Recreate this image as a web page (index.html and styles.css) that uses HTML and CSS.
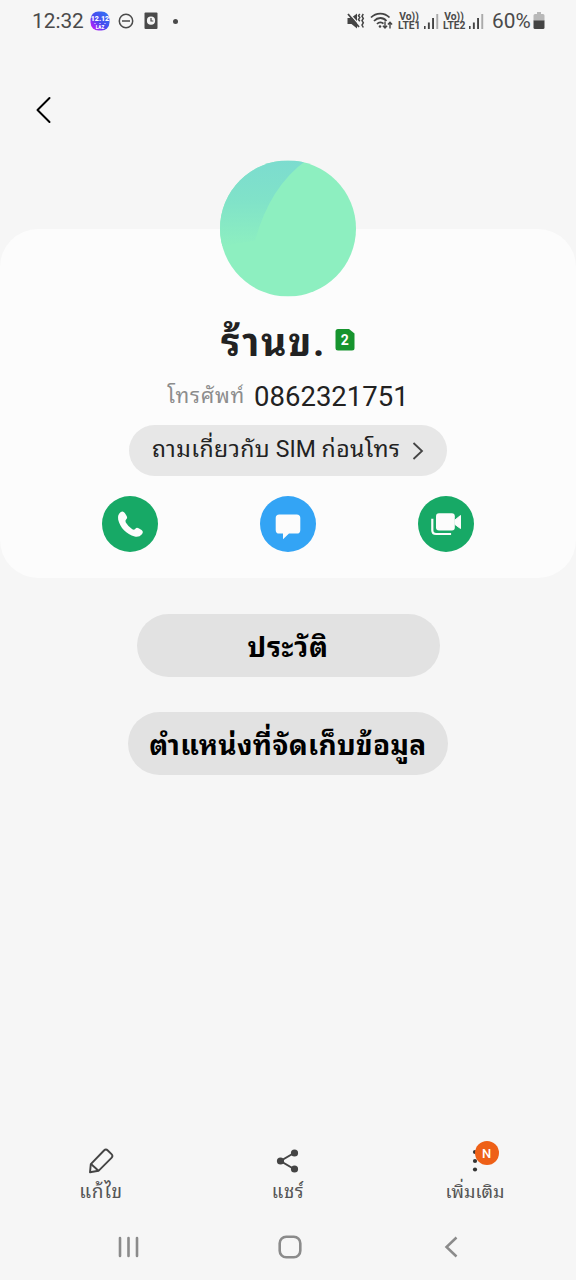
FILE: index.html
```html
<!DOCTYPE html>
<html lang="th">
<head>
<meta charset="utf-8">
<title>ร้านข.</title>
<link rel="stylesheet" href="styles.css">
</head>
<body>
<div class="screen">
  <header class="status">
    <div class="status-left">
      <span class="clock">12:32</span>
      <svg class="app-badge" width="20" height="20" viewBox="0 0 20 20">
        <defs><linearGradient id="promo" x1="0" y1="1" x2="1" y2="0"><stop offset="0" stop-color="#e010ff"/><stop offset=".45" stop-color="#4a48ee"/><stop offset="1" stop-color="#2c7cf6"/></linearGradient></defs>
        <rect x=".5" y=".5" width="19" height="19" rx="8" fill="url(#promo)"/>
        <text x="10" y="10" class="promo-big">12.12</text>
        <path d="M4 12.500h2M9 12.500h2M14 12.500h2" stroke="#c9c4ff" stroke-width=".7"/>
        <text x="10" y="18" class="promo-small">LAZ</text>
      </svg>
      <svg class="dnd" width="16" height="16" viewBox="0 0 16 16" fill="none" stroke="#4a4a4a" stroke-width="1.5"><circle cx="8" cy="8" r="6.7"/><path d="M4 8h8"/></svg>
      <svg class="alarm" width="14" height="18" viewBox="0 0 14 18"><rect x=".5" y=".5" width="13" height="16.5" rx="1" fill="#4a4a4a"/><circle cx="7" cy="8.7" r="4.1" fill="#f5f5f5"/><path d="M7 6v3h2.3" stroke="#4a4a4a" stroke-width="1.2" fill="none"/></svg>
      <span class="dot"></span>
    </div>
    <div class="status-right">
      <svg class="mute" width="18" height="18" viewBox="0 0 18 18"><path d="M.5 6H4l6-4.500v15L4.500 12h-4z" fill="#444"/><path d="M1.800 1L13 13.500" stroke="#f5f5f5" stroke-width="1.300"/><path d="M1 2l11 13" stroke="#444" stroke-width="1.800"/><path d="M12.800 2l-1.300 1.800 1.300 1.800-1.300 1.800 1.300 1.800M16.300 2L15 4.200l1.300 2.200L15 8.600l1.300 2.200L15 13l1.300 2.500" stroke="#444" stroke-width="1.500" fill="none"/></svg>
      <svg class="wifi" width="24" height="18" viewBox="0 0 24 18" fill="none" stroke="#444" stroke-width="1.800"><path d="M1 5.500C6 .2 14.500.2 19.500 5.500M4 9C7.800 5 13 5 16.500 9M7 12c2-2.200 4.800-2.200 6.500-.3"/><circle cx="10" cy="14.500" r="1.300" fill="#444" stroke="none"/><path d="M15 9.500V16M12.900 13.800l2.100 2.200 2.100-2.200M20 16.500v-6M17.900 12.500L20 10.300l2.100 2.200" stroke-width="1.400"/></svg>
      <span class="volte">Vo))<br>LTE1</span>
      <svg class="signal" width="16" height="16" viewBox="0 0 16 16"><path d="M1 13h1.600v3H1zM4.900 9.500h1.900V16H4.900zM9.100 5H11v11H9.100z" fill="#444"/><path d="M13.300 1h1.900v15h-1.900z" fill="#aaa"/></svg>
      <span class="volte">Vo))<br>LTE2</span>
      <svg class="signal" width="16" height="16" viewBox="0 0 16 16"><path d="M1 13h1.600v3H1zM4.900 9.500h1.900V16H4.900zM9.100 5H11v11H9.100z" fill="#444"/><path d="M13.300 1h1.900v15h-1.900z" fill="#aaa"/></svg>
      <span class="percent">60%</span>
      <svg class="battery" width="12" height="18" viewBox="0 0 12 18"><path d="M4 0h4v2h2q1.500 0 1.500 1.500V9H.5V3.500Q.5 2 2 2h2z" fill="#b8b8b8"/><path d="M.5 8.500h11v7q0 1.500-1.500 1.500H2Q.5 17 .5 15.500z" fill="#444"/></svg>
    </div>
  </header>

  <div class="toolbar">
    <svg width="16" height="28" viewBox="0 0 16 28" fill="none" stroke="#000" stroke-width="2" stroke-linecap="round" stroke-linejoin="round"><path d="M14.500 2L2.500 14l12 12"/></svg>
  </div>

  <main class="card">
    <svg class="avatar" width="136" height="137" viewBox="0 -.5 136 137">
      <defs>
        <linearGradient id="shade" x1="0" y1="0" x2="0" y2="1"><stop offset="0" stop-color="#7cdccf"/><stop offset=".45" stop-color="#80e2c9"/><stop offset="1" stop-color="#8defc0"/></linearGradient>
        <clipPath id="disc"><circle cx="68" cy="68" r="68"/></clipPath>
      </defs>
      <g clip-path="url(#disc)"><path fill="#8defc0" d="M0 0h136v136H0z"/><path fill="url(#shade)" d="M0 0h86Q50 26 35 80L0 86z"/></g>
    </svg>
    <div class="name-row">
      <h1 class="name">ร้านข.</h1>
      <svg class="sim" width="20" height="22" viewBox="0 0 20 22"><path d="M3 0h11l5.500 4.500V19q0 2.500-2.500 2.500H3Q.5 21.500.5 19V2.500Q.5 0 3 0z" fill="#16942e"/><text x="9.700" y="16" class="sim-text">2</text></svg>
    </div>
    <div class="phone-row"><span class="label">โทรศัพท์</span><span class="phone">0862321751</span></div>
    <div class="sim-pill"><span class="ask"><span class="wide">ถามเกี่ยวกับ</span> SIM <span class="wide">ก่อนโทร</span></span><svg width="12" height="18" viewBox="0 0 12 18" fill="none" stroke="#444" stroke-width="1.800"><path d="M1.500 1L10 9l-8.500 8"/></svg></div>
    <div class="actions">
      <svg width="56" height="56" viewBox="0 0 56 56"><circle cx="28" cy="28" r="28" fill="#17a966"/><path d="M18.500 16.200Q21 14.300 22.800 17l2 3.200q1.100 1.900-.7 3.400-1.200 1.200-.3 2.800 2.500 4.200 6.500 6.800 1.700 1 2.900-.3 1.300-1.900 3.400-.7l3 1.900q2.300 1.800.3 4.200-2.700 3.300-7.200 2.300C24.500 38.500 18 31.500 16.200 23.800q-1-5 2.300-7.600z" fill="#fcfcfc"/></svg>
      <svg width="56" height="56" viewBox="0 0 56 56"><circle cx="28" cy="28" r="28" fill="#33a4f5"/><path d="M19.300 18.500h17.400q3.600 0 3.600 3.600v11.800q0 3.600-3.600 3.600H29l-6 5.700v-5.700h-3.700q-3.600 0-3.600-3.600V22.100q0-3.600 3.600-3.600z" fill="#fcfcfc"/></svg>
      <svg width="56" height="56" viewBox="0 0 56 56"><circle cx="28" cy="28" r="28" fill="#17a966"/><rect x="18" y="17.300" width="18.800" height="17.200" rx="3" fill="#fcfcfc"/><path d="M37 24l5.500-4.500v13L37 28.500z" fill="#fcfcfc" stroke="#fcfcfc" stroke-width="1"/><path d="M14.300 22.800v11.400q0 3.800 3.800 3.800h15" fill="none" stroke="#fcfcfc" stroke-width="2.200"/></svg>
    </div>
  </main>

  <div class="buttons">
    <button class="btn history">ประวัติ</button>
    <button class="btn storage">ตำแหน่งที่จัดเก็บข้อมูล</button>
  </div>

  <nav class="tabs">
    <div class="tab"><svg width="26" height="26" viewBox="0 0 26 26" fill="none" stroke="#444" stroke-width="1.900" stroke-linejoin="round"><path d="M2 24.300l.8-8.200L16 2.500q1.900-1.900 3.800 0l3.700 3.700q1.800 1.800 0 3.600L10.500 22.800z"/><path d="M3 16l7.500 6.800"/></svg><span class="t-edit">แก้ไข</span></div>
    <div class="tab"><svg width="26" height="26" viewBox="0 0 26 26" fill="#444"><path d="M19 5L5.500 13 19 21" fill="none" stroke="#444" stroke-width="2"/><circle cx="5.500" cy="13" r="3.600"/><circle cx="19.500" cy="5" r="3.600"/><circle cx="19.500" cy="21" r="3.600"/></svg><span class="t-share">แชร์</span></div>
    <div class="tab"><svg width="26" height="26" viewBox="0 0 26 26" fill="#333"><circle cx="13" cy="4" r="2.100"/><circle cx="13" cy="13" r="2.100"/><circle cx="13" cy="21.500" r="2.100"/></svg><span class="new">N</span><span class="t-more">เพิ่มเติม</span></div>
  </nav>

  <footer class="navbar">
    <svg width="22" height="24" viewBox="0 0 22 24" stroke="#8b8b8b" stroke-width="2.600" stroke-linecap="round"><path d="M2 3v18M10.500 3v18M19 3v18"/></svg>
    <svg class="home" width="24" height="24" viewBox="0 0 24 24" fill="none" stroke="#8b8b8b" stroke-width="2.600"><rect x="1.700" y="1.700" width="20.600" height="20.600" rx="6.500"/></svg>
    <svg width="14" height="24" viewBox="0 0 14 24" fill="none" stroke="#8b8b8b" stroke-width="2.500"><path d="M12.500 2.500L2.500 12l10 9.500"/></svg>
  </footer>
</div>
</body>
</html>
```
FILE: styles.css
```css
* { box-sizing: border-box; }
body { margin: 0; background: #f6f6f6; font-family: Roboto, "Noto Sans Thai Looped", "Noto Looped Thai", Loma, Waree, "Noto Sans Thai", "Noto Sans", sans-serif; color: #222; }
svg { display: block; flex: none; }
.screen { width: 576px; height: 1280px; display: flex; flex-direction: column; overflow: hidden; }

.status { height: 44px; display: flex; justify-content: space-between; padding: 0 31px 2px 32px; flex: none; color: #4a4a4a; }
.status-left, .status-right { display: flex; align-items: center; white-space: nowrap; }
.clock { font-size: 20.800px; width: 52px; }
.app-badge { margin-left: 6px; }
.dnd { margin-left: 8px; }
.alarm { margin-left: 10px; }
.dot { width: 5px; height: 5px; border-radius: 50%; background: #4a4a4a; margin-left: 15px; }
.promo-big { font: 900 7px Roboto, sans-serif; fill: #fff; text-anchor: middle; }
.promo-small { font: 900 4.500px Roboto, sans-serif; fill: #fff; text-anchor: middle; }
.wifi { margin-left: 5px; }
.volte { font-size: 10.300px; font-weight: 700; line-height: 9.500px; width: 22px; text-align: center; margin-left: 4px; }
.signal { margin: 0 1px 0 3px; }
.signal + .volte { margin-left: 3px; }
.percent { font-size: 20.800px; margin-left: 7px; width: 39px; }
.battery { margin-left: 2px; }

.toolbar { height: 185px; padding: 52px 0 0 35px; flex: none; }

.card { height: 349px; flex: none; background: #fcfcfc; border-radius: 38px; display: flex; flex-direction: column; align-items: center; }
.avatar { margin-top: -69px; }
.name-row { display: flex; align-items: center; height: 60px; margin-top: 15px; gap: 9px; }
.name { margin: 0; padding-top: 1px; font-size: 39px; line-height: 60px; font-weight: 700; letter-spacing: 1.700px; color: #222; }
.sim { margin-bottom: 4px; }
.sim-text { font: 700 14px Roboto, sans-serif; fill: #fff; text-anchor: middle; }
.phone-row { display: flex; align-items: center; height: 40px; margin-top: 4px; gap: 9px; }
.label { font-size: 21px; letter-spacing: .800px; color: #8c8c8c; padding-bottom: 5px; }
.phone { font-size: 27.500px; }
.sim-pill { width: 318px; height: 51px; border-radius: 26px; background: #e7e7e7; margin-top: 9px; display: flex; align-items: center; padding-left: 23px; gap: 12px; white-space: nowrap; }
.ask { font-size: 23px; line-height: 40px; padding-bottom: 2px; width: 248px; }
.wide { letter-spacing: .450px; }
.actions { width: 372px; display: flex; justify-content: space-between; margin-top: 20px; }

.buttons { display: flex; flex-direction: column; align-items: center; gap: 35px; margin-top: 36px; }
.btn { border: 0; height: 63px; border-radius: 32px; background: #e2e2e2; color: #000; font: inherit; font-size: 28px; font-weight: 700; white-space: nowrap; padding: 0 0 3px; }
.history { width: 303px; letter-spacing: .700px; }
.storage { width: 320px; letter-spacing: .350px; }

.tabs { margin-top: auto; height: 68px; display: grid; grid-template-columns: repeat(3, 187px); justify-content: center; }
.tab { display: flex; flex-direction: column; align-items: center; position: relative; font-size: 18px; color: #555; padding-top: 1px; }
.tab span { line-height: 36px; }
.t-edit { font-size: 19px; letter-spacing: .700px; }
.t-share { font-size: 18.500px; letter-spacing: .700px; }
.tab .new { position: absolute; left: 93px; top: -6px; width: 24px; height: 24px; border-radius: 50%; background: #ee6017; color: #fff; font-size: 13px; font-weight: 500; line-height: 25px; text-align: center; }
.navbar { height: 65px; display: flex; justify-content: space-between; align-items: center; padding: 0 118px 1px; flex: none; }
.home { margin-right: 5px; }
```
